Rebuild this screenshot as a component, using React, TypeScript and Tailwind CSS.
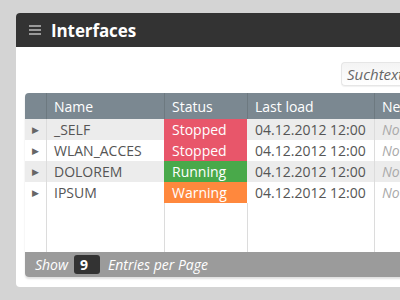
import React from 'react';

const rows = [
  { name: '_SELF', status: 'Stopped', color: 'bg-[#e8566a]', shade: true },
  { name: 'WLAN_ACCES', status: 'Stopped', color: 'bg-[#e8566a]', shade: false },
  { name: 'DOLOREM', status: 'Running', color: 'bg-[#49a94a]', shade: true },
  { name: 'IPSUM', status: 'Warning', color: 'bg-[#ff883d]', shade: false },
];

const font = { fontFamily: '"Open Sans", "DejaVu Sans", sans-serif' };

const App: React.FC = () => {
  return (
    <div className="w-[400px] h-[300px] overflow-hidden bg-[#d4d4d4] pt-[13px] pl-[16px]" style={font}>
      <div className="w-[440px] bg-white rounded-l-[4px] pb-[10px]">
        {/* Title bar */}
        <div className="h-[34px] bg-[#333333] rounded-tl-[4px] flex items-center pl-[13px]">
          <div className="flex flex-col gap-[2px] w-[12px]">
            <span className="h-[2px] bg-[#9a9a9a]" />
            <span className="h-[2px] bg-[#9a9a9a]" />
            <span className="h-[2px] bg-[#9a9a9a]" />
          </div>
          <h1 className="ml-[10px] text-white font-bold text-[17px] leading-none tracking-[-0.1px]">Interfaces</h1>
        </div>

        {/* Search */}
        <div className="flex pt-[15px] pl-[325px]">
          <div className="w-[100px] h-[24px] rounded-l-[4px] border border-[#e6e6e6] border-r-0 bg-gradient-to-b from-[#f4f4f4] to-white flex items-center pl-[5px] shadow-[0_1px_1px_rgba(0,0,0,0.06)]">
            <span className="italic text-[15px] text-[#666]">Suchtext</span>
          </div>
        </div>

        {/* Table */}
        <div className="ml-[9px] mt-[7px] rounded-l-[4px] overflow-hidden shadow-[0_2px_2px_rgba(0,0,0,0.12)]">
          <div className="flex h-[26px] bg-[#7b8891] text-white text-[14px] items-center">
            <div className="w-[21px] h-full" />
            <div className="w-[118px] h-full border-l border-[#6d7980] pl-[7px] flex items-center">Name</div>
            <div className="w-[83px] h-full border-l border-[#6d7980] pl-[7px] flex items-center">Status</div>
            <div className="w-[127px] h-full border-l border-[#6d7980] pl-[7px] flex items-center">Last load</div>
            <div className="flex-1 h-full border-l border-[#6d7980] pl-[7px] flex items-center">Next</div>
          </div>
          <div className="h-[133px] bg-white">
            {rows.map((r) => (
              <div key={r.name} className={`flex h-[21px] text-[14px] items-center ${r.shade ? 'bg-[#ececec]' : 'bg-white'}`}>
                <div className="w-[21px] h-full flex items-center justify-center text-[#666] text-[9px]">▶</div>
                <div className="w-[118px] h-full border-l border-[#dcdcdc] pl-[7px] flex items-center text-[#555]">{r.name}</div>
                <div className={`w-[83px] h-full pl-[8px] flex items-center text-white ${r.color}`}>{r.status}</div>
                <div className="w-[127px] h-full pl-[8px] flex items-center text-[#555]">04.12.2012 12:00</div>
                <div className="flex-1 h-full border-l border-[#dcdcdc] pl-[7px] flex items-center italic text-[#aaa]">Not loaded</div>
              </div>
            ))}
            <div className="flex h-[49px]">
              <div className="w-[21px]" />
              <div className="w-[118px] border-l border-[#dcdcdc]" />
              <div className="w-[83px] border-l border-[#dcdcdc]" />
              <div className="w-[127px] border-l border-[#dcdcdc]" />
              <div className="flex-1 border-l border-[#dcdcdc]" />
            </div>
          </div>
          <div className="h-[25px] bg-[#9b9b9b] flex items-center pl-[10px] text-white text-[14px] italic">
            <span>Show</span>
            <span className="ml-[6px] w-[26px] h-[19px] rounded-[3px] bg-[#333] not-italic font-bold flex items-center pl-[6px]">9</span>
            <span className="ml-[8px]">Entries per Page</span>
          </div>
        </div>
      </div>
    </div>
  );
};

export default App;
